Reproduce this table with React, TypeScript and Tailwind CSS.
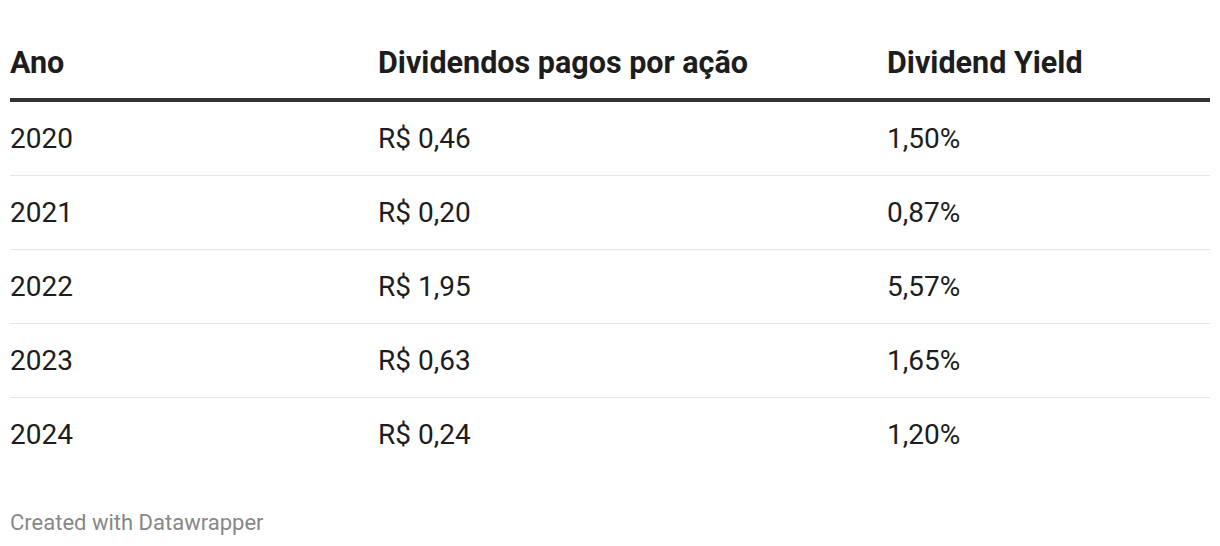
import React from "react";

const rows = [
  ["2020", "R$ 0,46", "1,50%"],
  ["2021", "R$ 0,20", "0,87%"],
  ["2022", "R$ 1,95", "5,57%"],
  ["2023", "R$ 0,63", "1,65%"],
  ["2024", "R$ 0,24", "1,20%"],
];

export default function App() {
  return (
    <div
      className="w-[1220px] h-[546px] bg-white px-[10px] pt-[42px] text-[#1d1d1d]"
      style={{ fontFamily: "Roboto, 'Liberation Sans', sans-serif" }}
    >
      <div className="grid grid-cols-[368px_509px_323px] border-b-[4px] border-[#333333] pb-[14px] text-[30.5px] font-bold leading-[42px]">
        <div>Ano</div>
        <div>Dividendos pagos por ação</div>
        <div>Dividend Yield</div>
      </div>
      <div className="flex flex-col">
        {rows.map((r, i) => (
          <div
            key={r[0]}
            className={`grid grid-cols-[368px_509px_323px] h-[74px] items-center text-[28px] ${
              i < rows.length - 1 ? "border-b border-[#e6e6e6]" : ""
            }`}
          >
            <div>{r[0]}</div>
            <div>{r[1]}</div>
            <div>{r[2]}</div>
          </div>
        ))}
      </div>
      <div className="mt-[39px] text-[22px] text-[#888888] leading-[24px]">Created with Datawrapper</div>
    </div>
  );
}
